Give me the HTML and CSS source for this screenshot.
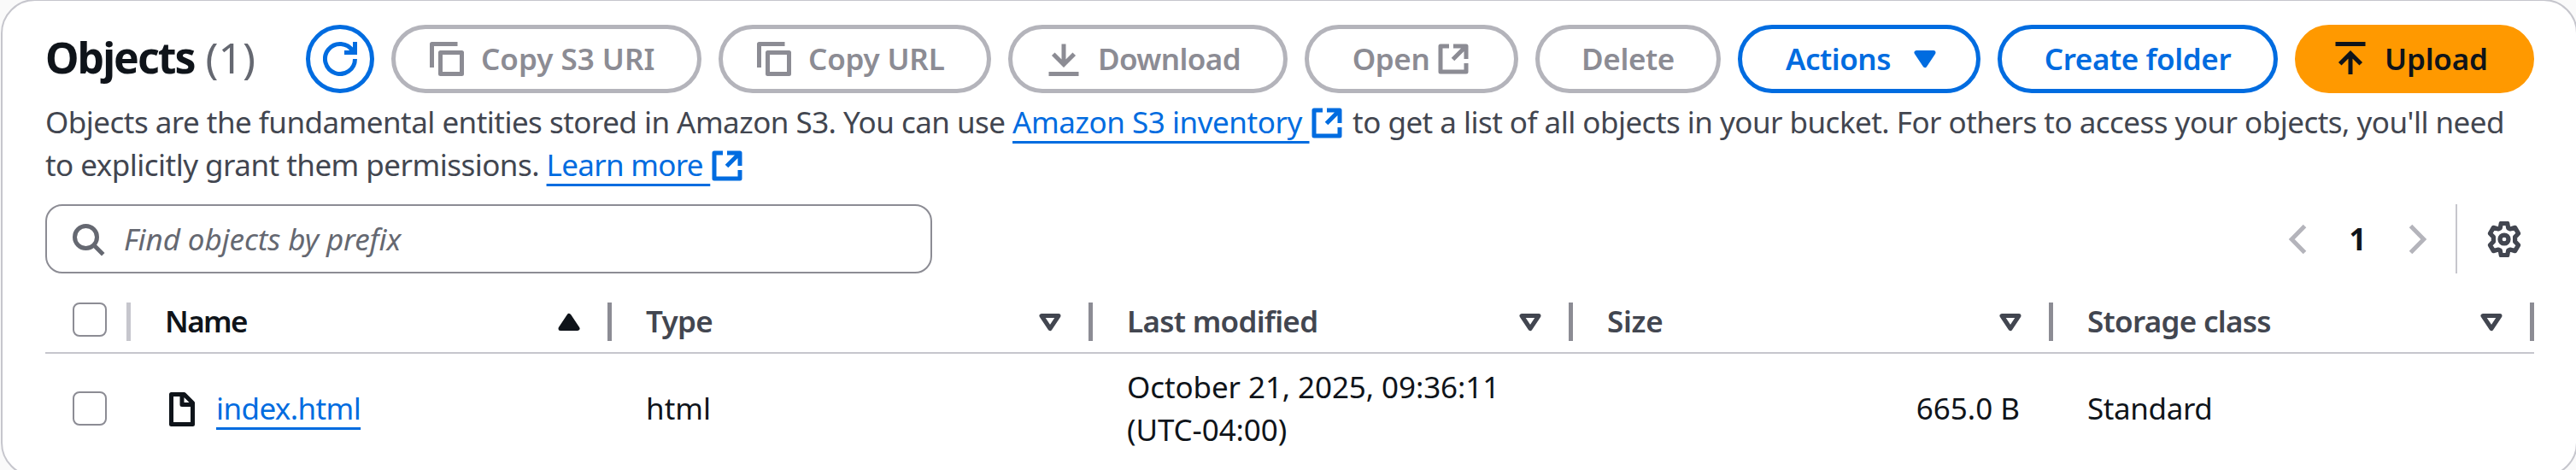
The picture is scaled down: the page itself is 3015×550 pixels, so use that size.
FILE: index.html
```html
<!DOCTYPE html>
<html lang="en">
<head>
<meta charset="utf-8">
<title>Objects</title>
<link rel="stylesheet" href="styles.css">
</head>
<body>
<svg class="sprite" aria-hidden="true">
  <symbol id="copy" viewBox="0 0 16 16"><path d="M1 12V1h12M5 5h10v10H5z"/></symbol>
  <symbol id="external" viewBox="0 0 16 16"><path d="M6 2H2v12h12v-4M8 2h6v6M14 2 7.800 8.200"/></symbol>
  <symbol id="sort" viewBox="0 0 16 16"><path d="M4 5h8l-4 6z"/></symbol>
</svg>
<main class="card">
  <header class="header">
    <h2 class="title"><span class="title-text">Objects</span> <span class="count">(1)</span></h2>
    <div class="actions">
      <button class="btn btn-icon" aria-label="Refresh"><svg class="icon icon-sharp" viewBox="0 0 16 16"><path d="M15 8A7 7 0 1 1 14 4.400M15 0v5h-5"/></svg></button>
      <button class="btn btn-disabled btn-start copy-uri"><svg class="icon"><use href="#copy"/></svg><span>Copy S3 URI</span></button>
      <button class="btn btn-disabled btn-start copy-url"><svg class="icon"><use href="#copy"/></svg><span>Copy URL</span></button>
      <button class="btn btn-disabled btn-start download"><svg class="icon icon-sharp" viewBox="0 0 16 16"><path d="M1 15h14M8 1v9.600M3.100 5.700 8 10.600l4.900-4.900"/></svg><span>Download</span></button>
      <button class="btn btn-disabled open"><span>Open</span><svg class="icon"><use href="#external"/></svg></button>
      <button class="btn btn-disabled delete"><span>Delete</span></button>
      <button class="btn menu"><span>Actions</span><svg class="icon icon-solid" viewBox="0 0 16 16"><path d="M4 5h8l-4 6z"/></svg></button>
      <button class="btn create"><span>Create folder</span></button>
      <button class="btn btn-primary btn-start upload"><svg class="icon icon-sharp" viewBox="0 0 16 16"><path d="M1 1h14M8 15.200V5.400M3.100 10.300 8 5.400l4.900 4.900"/></svg><span>Upload</span></button>
    </div>
  </header>
  <p class="description">Objects are the fundamental entities stored in Amazon S3. You can use <a class="link inventory" href="#">Amazon S3 inventory </a><svg class="icon icon-link"><use href="#external"/></svg> to get a list of all objects in your bucket. For others to access your objects, you'll need<br>to explicitly grant them permissions. <a class="link learn" href="#">Learn more </a><svg class="icon icon-link"><use href="#external"/></svg></p>
  <div class="toolbar">
    <div class="search"><svg class="icon icon-sharp" viewBox="0 0 16 16"><circle cx="7" cy="7" r="5.200"/><path d="m10.600 10.600 4.500 4.500"/></svg><span>Find objects by prefix</span></div>
    <nav class="pagination">
      <svg class="icon icon-page" viewBox="0 0 16 16"><path d="M11 1.800 4.900 8l6.100 6.200"/></svg>
      <span class="page">1</span>
      <svg class="icon icon-page" viewBox="0 0 16 16"><path d="M5 1.800 11.100 8 5 14.200"/></svg>
      <div class="settings"><svg class="icon icon-gear" viewBox="0 0 16 16"><path d="M6.600.9h2.800l.4 2.100.8.4 2.200-.6 1.500 2.600-1.500 1.600v2l1.500 1.600-1.500 2.600-2.200-.6-.8.4-.4 2.100H6.600l-.4-2.100-.8-.4-2.200.6-1.500-2.600L3.200 9V7L1.700 5.400l1.500-2.600 2.200.6.8-.4z"/><circle cx="8" cy="8" r="1.900"/></svg></div>
    </nav>
  </div>
  <section class="table">
    <div class="row head">
      <div class="cell select"><i class="check"></i></div>
      <div class="cell sorted"><span class="t-name">Name</span><svg class="icon icon-solid" viewBox="0 0 16 16"><path d="m8 5 4 6H4z"/></svg></div>
      <div class="cell"><span>Type</span><svg class="icon"><use href="#sort"/></svg></div>
      <div class="cell"><span>Last modified</span><svg class="icon"><use href="#sort"/></svg></div>
      <div class="cell"><span class="t-size">Size</span><svg class="icon"><use href="#sort"/></svg></div>
      <div class="cell"><span>Storage class</span><svg class="icon"><use href="#sort"/></svg></div>
    </div>
    <div class="row body">
      <div class="cell select"><i class="check"></i></div>
      <div class="cell file"><svg class="icon" viewBox="0 0 16 16"><path d="M3 1h6l4 4v10H3zM8 1v4.800h5"/></svg><a class="link" href="#">index.html</a></div>
      <div class="cell">html</div>
      <div class="cell date">October 21, 2025, 09:36:11<br>(UTC-04:00)</div>
      <div class="cell size">665.0 B</div>
      <div class="cell class">Standard</div>
    </div>
  </section>
</main>
</body>
</html>
```
FILE: styles.css
```css
* { box-sizing: border-box; }
html { background: #fafafa; }
body {
  margin: 0;
  height: 550px;
  overflow: hidden;
  font: 35px/50px "Noto Sans", "Open Sans", sans-serif;
  color: #0f141a;
}
.sprite { display: none; }
.card {
  width: 3016px;
  height: 559px;
  margin: -1px 0 0 1px;
  padding: 28px 49px 0 50px;
  border: 2px solid #c6c6cd;
  border-radius: 40px;
  background: #fff;
}
.icon {
  flex: none;
  width: 40px;
  height: 40px;
  fill: none;
  stroke: currentColor;
  stroke-width: 2;
  stroke-linejoin: round;
}
.icon-solid { fill: currentColor; }
.icon-sharp { stroke-linejoin: miter; }

.header {
  display: flex;
  justify-content: space-between;
  height: 80px;
}
.title {
  margin: 0;
  padding-top: 8px;
  font-size: 50px;
  line-height: 60px;
  font-weight: 700;
  white-space: nowrap;
}
.title-text { letter-spacing: -2px; }
.count { color: #656871; font-weight: 400; }
.actions { display: flex; gap: 20px; }
.btn {
  display: flex;
  align-items: center;
  justify-content: center;
  gap: 20px;
  height: 80px;
  padding: 0;
  border: 5px solid #006ce0;
  border-radius: 40px;
  background: #fff;
  color: #006ce0;
  font: 600 35px/50px "Noto Sans", "Open Sans", sans-serif;
  white-space: nowrap;
}
.btn-icon { width: 80px; }
.btn-start { justify-content: flex-start; padding-left: 40px; letter-spacing: -.2px; }
.btn-disabled { border-color: #b4b4bb; color: #8c8c94; }
.btn-primary { border-color: #ff9900; background: #ff9900; color: #0f141a; }
.copy-uri { width: 363px; letter-spacing: 0; }
.copy-url { width: 319px; }
.download { width: 327px; letter-spacing: -.6px; }
.open { width: 250px; gap: 8px; letter-spacing: -.4px; }
.delete { width: 217px; letter-spacing: -.4px; }
.menu { width: 284px; justify-content: space-between; padding: 0 40px 0 51px; letter-spacing: -.5px; }
.create { width: 328px; letter-spacing: -.4px; }
.upload { width: 280px; }

.description {
  margin: 9px 0 0;
  color: #424650;
  letter-spacing: -.53px;
  white-space: nowrap;
}
.link {
  color: #006ce0;
  text-decoration: underline;
  text-decoration-thickness: 3px;
  text-underline-offset: 9px;
}
.inventory { letter-spacing: -.45px; }
.learn { letter-spacing: -.7px; }
.icon-link { margin-right: 2px; color: #006ce0; vertical-align: -8px; }

.toolbar {
  display: flex;
  justify-content: space-between;
  height: 81px;
  margin-top: 21px;
}
.search {
  display: flex;
  align-items: center;
  gap: 22px;
  width: 1038px;
  padding-left: 28px;
  border: 2px solid #8c8c94;
  border-radius: 20px;
  color: #656871;
  font-style: italic;
  letter-spacing: -.1px;
}
.pagination { display: flex; align-items: center; font-weight: 700; }
.icon-page { color: #b4b4bb; stroke-linejoin: miter; }
.page { width: 99px; text-align: center; }
.settings {
  display: flex;
  align-items: center;
  justify-content: flex-end;
  width: 78px;
  height: 81px;
  margin: 0 14px 0 25px;
  border-left: 2px solid #c6c6cd;
}
.icon-gear { width: 42px; height: 42px; color: #424650; }

.row {
  display: grid;
  grid-template-columns: 100px 563px 563px 562px 562px 563px;
}
.cell {
  display: flex;
  align-items: center;
  padding-left: 40px;
}
.select { padding-left: 32px; }
.check {
  width: 40px;
  height: 40px;
  border: 2px solid #8c8c94;
  border-radius: 8px;
}
.head {
  height: 94px;
  padding-top: 20px;
  border-bottom: 2px solid #c6c6cd;
  color: #424650;
  font-weight: 600;
  letter-spacing: -.7px;
}
.head .cell {
  height: 72px;
  justify-content: space-between;
  padding-right: 30px;
  background: linear-gradient(#8c8c94, #8c8c94) right 14px / 5px 45px no-repeat;
}
.head .icon { margin-top: 2px; }
.head .check { margin-bottom: 4px; }
.head .select { padding-right: 0; background-image: linear-gradient(#c6c6cd, #c6c6cd); }
.head .sorted { color: #0f141a; }
.t-name { letter-spacing: -1.6px; }
.t-size { letter-spacing: -.3px; }
.body { height: 127px; }
.file { gap: 20px; letter-spacing: -.6px; }
.file .icon { margin-top: 3px; }
.date { letter-spacing: -.1px; }
.size { justify-content: flex-end; padding-right: 39px; }
.class { letter-spacing: -.4px; }
```
